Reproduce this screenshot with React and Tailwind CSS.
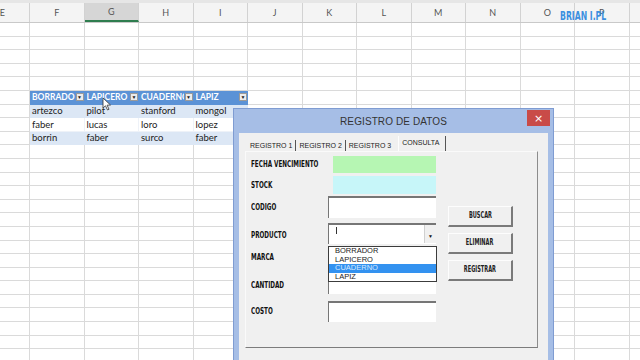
import React from 'react';

const COLS = ['E', 'F', 'G', 'H', 'I', 'J', 'K', 'L', 'M', 'N', 'O', 'P', 'Q'];
const HEAD = ['BORRADOR', 'LAPICERO', 'CUADERNO', 'LAPIZ'];
const DATA = {
  6: ['artezco', 'pilot', 'stanford', 'mongol'],
  7: ['faber', 'lucas', 'loro', 'lopez'],
  8: ['borrin', 'faber', 'surco', 'faber'],
};

const cond = "font-['DejaVu_Sans_Condensed',sans-serif]";

function GridRow({ idx }) {
  return (
    <div className="flex h-[13.6px] ml-[-24.5px]">
      {COLS.map((c, i) => {
        const inTable = i >= 1 && i <= 4;
        if (idx === 5 && inTable) {
          return (
            <div
              key={c}
              className="w-[54.5px] shrink-0 bg-[#5b92d6] border-b border-[#5b92d6] flex items-center pl-[2px] pr-[1px] gap-[1px] overflow-hidden"
            >
              <span className="flex-1 overflow-hidden whitespace-nowrap text-[8.5px] font-bold text-white leading-none">
                {HEAD[i - 1]}
              </span>
              <span className="w-[8px] h-[8px] shrink-0 bg-[#ececec] border border-[#9a9a9a] flex items-center justify-center text-[5px] text-[#222] leading-none">
                ▼
              </span>
            </div>
          );
        }
        if (DATA[idx] && inTable) {
          const shaded = idx !== 7;
          return (
            <div
              key={c}
              className={`w-[54.5px] shrink-0 border-b border-r flex items-center pl-[2px] text-[9.5px] text-[#222] leading-none overflow-hidden whitespace-nowrap ${
                shaded ? 'bg-[#dce7f5] border-[#dce7f5]' : 'bg-white border-[#eef2f8]'
              }`}
            >
              {DATA[idx][i - 1]}
            </div>
          );
        }
        return <div key={c} className="w-[54.5px] shrink-0 border-b border-r border-[#dadada]" />;
      })}
    </div>
  );
}

function Label({ children }) {
  return (
    <span className={`inline-block origin-left scale-x-70 text-[9px] font-bold text-[#111] whitespace-nowrap leading-none ${cond}`}>
      {children}
    </span>
  );
}

function TextBox({ className = '' }) {
  return <div className={`bg-white border-t-2 border-l border-[#767676] ${className}`} />;
}

function FormRow({ label, mt, h, children, labelPad = '' }) {
  return (
    <div className={`flex items-center ${mt} ${h}`}>
      <div className={`w-[77px] shrink-0 flex items-center leading-none ${labelPad}`}>
        <Label>{label}</Label>
      </div>
      {children}
    </div>
  );
}

function Btn({ children }) {
  return (
    <div className="w-[65px] h-[21px] bg-[#f0f0f0] border-t border-l border-[#fdfdfd] border-r-2 border-b-2 border-r-[#7a7a7a] border-b-[#7a7a7a] flex items-center justify-center">
      <span className={`inline-block scale-x-70 text-[8px] font-bold text-[#222] leading-none ${cond}`}>{children}</span>
    </div>
  );
}

function Tab({ children, active, sep = true }) {
  return (
    <div
      className={`flex items-center px-[3px] text-[7px] text-[#222] leading-none whitespace-nowrap font-['Liberation_Sans',sans-serif] ${
        sep ? 'border-r border-[#555]' : ''
      } ${active ? 'h-[15px] pb-[3px] ml-[4px] pr-[6px] border-l border-l-[#fdfdfd]' : 'h-[11px]'}`}
    >
      {children}
    </div>
  );
}

function Dialog() {
  return (
    <div className="absolute left-[233px] top-[108px] w-[321px] h-[262px] bg-[#a6bee6] border border-[#7f9cd2] flex flex-col px-[5px]">
      <div className="h-[24px] shrink-0 flex items-center justify-center text-[10px] text-[#333] font-['Liberation_Sans',sans-serif] tracking-[0.1px]">
        REGISTRO DE DATOS
      </div>
      <div className="absolute right-[3px] top-[1px] w-[23px] h-[16px] bg-[#c94b48] flex items-center justify-center text-white text-[11px] leading-none font-['DejaVu_Sans',sans-serif]">
        ×
      </div>
      <div className="flex-1 bg-[#f0f0f0] flex flex-col">
        <div className="h-[18px] flex items-end pl-[8px]">
          <Tab>REGISTRO 1</Tab>
          <Tab>REGISTRO 2</Tab>
          <Tab sep={false}>REGISTRO 3</Tab>
          <Tab active>CONSULTA</Tab>
        </div>
        <div className="ml-[6px] w-[293px] h-[197px] border-t border-l border-[#fafafa] border-r border-b border-r-[#8c8c8c] border-b-[#7c7c7c] flex">
          <div className="pl-[5px] w-[192px] flex flex-col">
            <FormRow label="FECHA VENCIMIENTO" mt="mt-[4px]" h="h-[17px]">
              <div className="ml-[5px] w-[103px] h-full bg-[#b6f6b3]" />
            </FormRow>
            <FormRow label="STOCK" mt="mt-[3px]" h="h-[18px]">
              <div className="ml-[5px] w-[103px] h-full bg-[#c7f6f9]" />
            </FormRow>
            <FormRow label="CODIGO" mt="mt-[2px]" h="h-[22px]">
              <TextBox className="w-[108px] h-full" />
            </FormRow>
            <FormRow label="PRODUCTO" mt="mt-[5px]" h="h-[21px]" labelPad="pt-[3px]">
              <div className="relative w-[108px] h-full bg-white border-t-2 border-l border-[#767676] z-10">
                <div className="absolute left-[7px] top-[2px] w-px h-[7px] bg-[#333]" />
                <div className="absolute right-0 top-0 w-[12px] h-[18px] bg-[#f0f0f0] border-l border-[#d0d0d0] flex items-end justify-center pb-[4px] text-[5px] text-[#111] leading-none">
                  ▼
                </div>
                <div className="absolute left-[-1px] top-[21px] w-[109px] h-[36px] bg-white border border-[#3c3c3c] flex flex-col text-[7.5px] leading-[8.5px] text-[#222] font-['Liberation_Sans',sans-serif]">
                  <div className="pl-[6px] h-[8.5px]">BORRADOR</div>
                  <div className="pl-[6px] h-[8.5px]">LAPICERO</div>
                  <div className="pl-[6px] h-[8.5px] bg-[#3392f0] text-[#d7e8ff]">CUADERNO</div>
                  <div className="pl-[6px] h-[8.5px]">LAPIZ</div>
                </div>
              </div>
            </FormRow>
            <FormRow label="MARCA" mt="mt-[2px]" h="h-[23px]">
              <TextBox className="w-[108px] h-full" />
            </FormRow>
            <FormRow label="CANTIDAD" mt="mt-[2px]" h="h-[23px]" labelPad="pt-[5px]">
              <TextBox className="w-[108px] h-full" />
            </FormRow>
            <FormRow label="COSTO" mt="mt-[7px]" h="h-[21px]">
              <TextBox className="w-[108px] h-full" />
            </FormRow>
          </div>
          <div className="ml-[10px] pt-[54px] flex flex-col gap-[6px]">
            <Btn>BUSCAR</Btn>
            <Btn>ELIMINAR</Btn>
            <Btn>REGISTRAR</Btn>
          </div>
        </div>
      </div>
    </div>
  );
}

export default function App() {
  return (
    <div className="relative w-[640px] h-[360px] overflow-hidden bg-white font-['Lato',sans-serif]">
      <div className="h-[3px] bg-[#e6e6e6]" />
      <div className="flex h-[20px] ml-[-24.5px] border-b border-[#c9c9c9]">
        {COLS.map((c) => (
          <div
            key={c}
            className={`w-[54.5px] shrink-0 border-r border-[#d2d2d2] flex items-center justify-center text-[9px] text-[#555] ${
              c === 'G' ? 'bg-[#d6d6d6] border-b-2 border-b-[#2f7d4f]' : 'bg-[#f4f4f4]'
            }`}
          >
            {c}
          </div>
        ))}
      </div>
      {Array.from({ length: 25 }, (_, i) => (
        <GridRow key={i} idx={i} />
      ))}

      <div className="absolute left-[560px] top-[2px] w-[52px] overflow-visible">
        <span className={`inline-block origin-left scale-x-[0.66] text-[13px] font-bold text-[#3b8fe0] leading-none whitespace-nowrap ${cond}`}>
          BRIAN I.PL
        </span>
      </div>

      <svg className="absolute left-[102px] top-[97px]" width="10" height="14" viewBox="0 0 10 14">
        <path d="M1 1 L1 11 L3.5 8.8 L5.5 13 L7 12.3 L5.1 8.2 L8.5 8 Z" fill="#fff" stroke="#333" strokeWidth="0.8" />
      </svg>

      <Dialog />
    </div>
  );
}
